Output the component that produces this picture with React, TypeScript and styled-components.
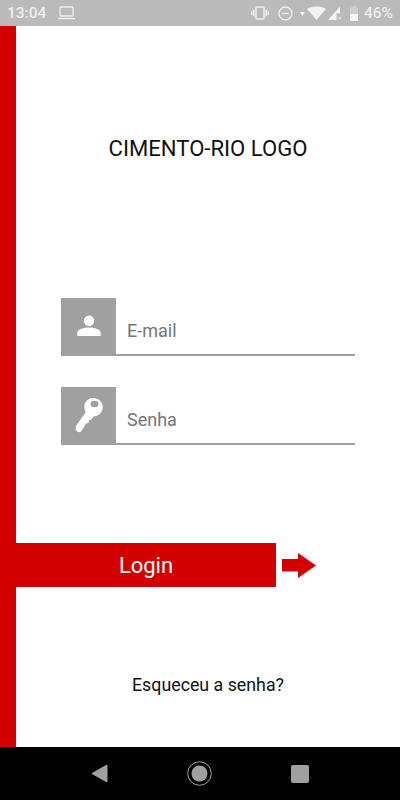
import React from "react";
import styled, { createGlobalStyle } from "styled-components";

const GlobalStyle = createGlobalStyle`
  html, body {
    margin: 0;
    padding: 0;
    background: #fff;
  }
  * {
    box-sizing: border-box;
  }
`;

const UserIcon = () => (
  <svg width="24" height="24" viewBox="0 0 24 24" fill="#fff">
    <circle cx="12" cy="6.8" r="5.200" />
    <path d="M0.3 22 V18.8 C0.3 15 7.5 13.6 12 13.6 C16.5 13.6 23.7 15 23.7 18.8 V22 Z" />
  </svg>
);

const KeyIcon = () => (
  <svg width="28" height="35" viewBox="0 0 28 35">
    <path
      fill="#fff"
      d="M18 0 C23.500 0 27.800 4 27.800 9 C27.800 14 23.500 18.500 18.500 18.500 L16.500 21.500 L14 22 L13.500 25 L11 25.500 L7.500 31.500 C6.500 33.500 5 34.500 3.500 34 C1.500 33.500 0.500 32 0.500 30.500 C0.500 29 1 28 2 26.500 L10.500 14.500 C9 10 9 7 10 5 C11.500 2 14.500 0 18 0 Z"
    />
    <ellipse cx="19.500" cy="6" rx="4" ry="3.200" fill="#a0a0a0" />
  </svg>
);

const ArrowIcon = () => (
  <svg width="34" height="25" viewBox="0 0 34 25" fill="#d40000">
    <path d="M0 6 H16 V0 L34 12.500 L16 25 V18.500 H0 Z" />
  </svg>
);

const LaptopIcon = () => (
  <svg width="17" height="14" viewBox="0 0 17 14" fill="none" stroke="#eee" strokeWidth="1.300">
    <rect x="2" y="1" width="13" height="9" rx="1" />
    <path d="M0 12.500 H17" />
  </svg>
);

const VibrateIcon = () => (
  <svg width="18" height="14" viewBox="0 0 18 14" fill="none" stroke="#eee" strokeWidth="1.500">
    <rect x="5" y="1" width="8" height="12" rx="1" />
    <path d="M2.800 3.500 V10.500 M15.200 3.500 V10.500 M0.700 5 V9 M17.300 5 V9" />
  </svg>
);

const DndIcon = () => (
  <svg width="15" height="15" viewBox="0 0 15 15" fill="none" stroke="#eee" strokeWidth="1.400">
    <circle cx="7.500" cy="7.500" r="6.500" />
    <path d="M4 7.500 H11" />
  </svg>
);

const WifiIcon = () => (
  <svg width="26" height="14" viewBox="0 0 26 14" fill="#f2f2f2">
    <path d="M0 6 L5 6 L2.500 10 Z" />
    <path d="M7 3 C11 -0.500 22 -0.500 26 3 L16.500 14 Z" />
  </svg>
);

const SignalIcon = () => (
  <svg width="14" height="14" viewBox="0 0 14 14" fill="#f2f2f2">
    <path d="M0 14 L12 0.500 V7.500 H8.500 V14 Z" />
    <path d="M10 10.500 L13 13.500 M13 10.500 L10 13.500" stroke="#f2f2f2" strokeWidth="0.800" />
  </svg>
);

const BatteryIcon = () => (
  <svg width="8" height="15" viewBox="0 0 8 15">
    <path fill="#cfcfcf" d="M2.500 0 H5.500 V1.500 H8 V8 H0 V1.500 H2.500 Z" />
    <rect y="8" width="8" height="7" fill="#f5f5f5" />
  </svg>
);

const BackIcon = () => (
  <svg width="17" height="19" viewBox="0 0 17 19" fill="#a0a0a0">
    <path d="M16 1 V18 L1 9.500 Z" stroke="#a0a0a0" strokeLinejoin="round" />
  </svg>
);

const HomeIcon = () => (
  <svg width="25" height="25" viewBox="0 0 25 25">
    <circle cx="12.500" cy="12.500" r="11.800" fill="none" stroke="#a0a0a0" strokeWidth="1" />
    <circle cx="12.500" cy="12.500" r="8" fill="#a0a0a0" />
  </svg>
);

const RecentIcon = () => (
  <svg width="18" height="18" viewBox="0 0 18 18" fill="#a0a0a0">
    <rect width="18" height="18" rx="2" />
  </svg>
);

const Screen = styled.div`
  width: 400px;
  height: 800px;
  display: flex;
  flex-direction: column;
  overflow: hidden;
  font-family: Roboto, "Liberation Sans", sans-serif;
`;

const StatusBar = styled.div`
  height: 26px;
  flex: none;
  display: flex;
  align-items: center;
  justify-content: space-between;
  padding: 0 7px;
  background: #bababa;
  color: #eee;
  font-size: 15.500px;
  font-weight: 500;
`;

const StatusGroup = styled.div`
  display: flex;
  align-items: center;
`;

const StatusItem = styled.span<{ $left: number }>`
  display: flex;
  margin-left: ${({ $left }) => $left}px;
`;

const Body = styled.div`
  flex: 1;
  display: flex;
  min-height: 0;
`;

const RedStripe = styled.div`
  width: 16px;
  flex: none;
  background: #d40000;
`;

const Content = styled.div`
  flex: 1;
  display: flex;
  flex-direction: column;
`;

const Logo = styled.h1`
  margin: 109px 0 0;
  text-align: center;
  font-size: 22.100px;
  line-height: 26px;
  font-weight: 400;
  color: #111;
`;

const Form = styled.div`
  margin: 137px 0 0 45px;
  width: 294px;
  display: flex;
  flex-direction: column;
  gap: 31px;
`;

const Field = styled.label`
  height: 58px;
  display: flex;
  border-bottom: 2px solid #a0a0a0;
`;

const FieldIcon = styled.span`
  width: 55px;
  flex: none;
  display: flex;
  align-items: center;
  justify-content: center;
  background: #a0a0a0;
`;

const FieldText = styled.span`
  padding: 22px 0 0 11px;
  font-size: 18px;
  line-height: 21px;
  color: #757575;
`;

const LoginRow = styled.div`
  margin-top: 98px;
  display: flex;
  align-items: center;
  gap: 6px;
`;

const LoginButton = styled.button`
  width: 260px;
  height: 44px;
  border: 0;
  padding: 0;
  background: #d40000;
  color: #fff;
  font-family: inherit;
  font-size: 22px;
`;

const ForgotLink = styled.a`
  margin-top: 87px;
  text-align: center;
  font-size: 17.800px;
  line-height: 22px;
  color: #111;
`;

const NavBar = styled.div`
  height: 53px;
  flex: none;
  display: flex;
  align-items: center;
  justify-content: space-between;
  padding: 0 91px;
  background: #000;
`;

const App = () => (
  <Screen>
    <GlobalStyle />
    <StatusBar>
      <StatusGroup>
        <span>13:04</span>
        <StatusItem $left={12}>
          <LaptopIcon />
        </StatusItem>
      </StatusGroup>
      <StatusGroup>
        <VibrateIcon />
        <StatusItem $left={9}>
          <DndIcon />
        </StatusItem>
        <StatusItem $left={7}>
          <WifiIcon />
        </StatusItem>
        <StatusItem $left={2}>
          <SignalIcon />
        </StatusItem>
        <StatusItem $left={8}>
          <BatteryIcon />
        </StatusItem>
        <StatusItem $left={6}>46%</StatusItem>
      </StatusGroup>
    </StatusBar>
    <Body>
      <RedStripe />
      <Content>
        <Logo>CIMENTO-RIO LOGO</Logo>
        <Form>
          <Field>
            <FieldIcon>
              <UserIcon />
            </FieldIcon>
            <FieldText>E-mail</FieldText>
          </Field>
          <Field>
            <FieldIcon>
              <KeyIcon />
            </FieldIcon>
            <FieldText>Senha</FieldText>
          </Field>
        </Form>
        <LoginRow>
          <LoginButton>Login</LoginButton>
          <ArrowIcon />
        </LoginRow>
        <ForgotLink>Esqueceu a senha?</ForgotLink>
      </Content>
    </Body>
    <NavBar>
      <BackIcon />
      <HomeIcon />
      <RecentIcon />
    </NavBar>
  </Screen>
);

export default App;
